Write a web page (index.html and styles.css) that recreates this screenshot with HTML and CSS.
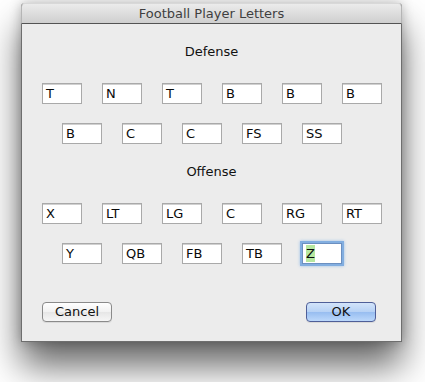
FILE: index.html
```html
<!DOCTYPE html>
<html>
<head>
<meta charset="utf-8">
<link rel="stylesheet" href="styles.css">
</head>
<body>
<div class="window">
  <div class="titlebar">Football Player Letters</div>
  <div class="content">
    <div class="heading">Defense</div>
    <div class="row row-a first">
      <div class="field">T</div><div class="field">N</div><div class="field">T</div><div class="field">B</div><div class="field">B</div><div class="field">B</div>
    </div>
    <div class="row row-b">
      <div class="field">B</div><div class="field">C</div><div class="field">C</div><div class="field">FS</div><div class="field">SS</div>
    </div>
    <div class="heading second">Offense</div>
    <div class="row row-a first">
      <div class="field">X</div><div class="field">LT</div><div class="field">LG</div><div class="field">C</div><div class="field">RG</div><div class="field">RT</div>
    </div>
    <div class="row row-b">
      <div class="field">Y</div><div class="field">QB</div><div class="field">FB</div><div class="field">TB</div><div class="field focused"><span class="sel">Z</span></div>
    </div>
    <div class="buttons">
      <div class="btn">Cancel</div>
      <div class="btn default">OK</div>
    </div>
  </div>
</div>
</body>
</html>
```
FILE: styles.css
```css
html, body {
  margin: 0;
  padding: 0;
  background: #ffffff;
  width: 425px;
  height: 382px;
  overflow: hidden;
}
body {
  font-family: "DejaVu Sans", "Liberation Sans", sans-serif;
  font-size: 13px;
  color: #111;
  padding-top: 3px;
  padding-left: 21px;
  box-sizing: border-box;
}
.window {
  width: 381px;
  height: 339px;
  background: #ececec;
  border: 1px solid #6e6e6e;
  border-top: none;
  box-sizing: border-box;
  border-radius: 4px 4px 0 0;
  box-shadow: 0 24px 36px rgba(0,0,0,0.6), 0 0 12px rgba(0,0,0,0.25);
  display: flex;
  flex-direction: column;
}
.titlebar {
  height: 21px;
  box-sizing: border-box;
  background: linear-gradient(#ebebeb, #cfcfcf);
  border-bottom: 1px solid #535353;
  border-radius: 4px 4px 0 0;
  text-align: center;
  font-size: 13px;
  line-height: 20px;
  color: #3f3f3f;
  margin: 0 -1px;
  border-left: 1px solid #b5b5b5;
  border-right: 1px solid #b5b5b5;
  border-top: 1px solid #d8d8d8;
}
.content {
  padding: 20px 0 0 0;
  display: flex;
  flex-direction: column;
}
.heading {
  text-align: center;
  height: 16px;
  line-height: 16px;
  font-size: 13px;
  color: #111;
}
.heading.second {
  margin-top: 20px;
}
.row {
  display: flex;
  gap: 20px;
  margin-top: 19px;
}
.row.first {
  margin-top: 23px;
}
.row-a {
  padding-left: 20px;
}
.row-b {
  padding-left: 40px;
}
.field {
  width: 40px;
  height: 21px;
  box-sizing: border-box;
  background: #fff;
  border: 1px solid #a9a9a9;
  box-shadow: inset 0 1px 0 #d0d0d0;
  padding-left: 3px;
  line-height: 20px;
  font-size: 13px;
  color: #0a0a0a;
}
.field.focused {
  box-shadow: 0 0 0 2px #82aee0, 0 0 3px 2px #9cc0e8;
  border-color: #6b8fc0;
}
.sel {
  background: #b6e7a0;
  padding: 1px 0;
}
.buttons {
  display: flex;
  justify-content: space-between;
  margin-top: 38px;
  padding: 0 25px 0 20px;
}
.btn {
  width: 70px;
  height: 20px;
  box-sizing: border-box;
  border-radius: 4px;
  border: 1px solid #8a8a8a;
  background: linear-gradient(#ffffff, #f1f1f1 50%, #e6e6e6 51%, #f6f6f6);
  text-align: center;
  line-height: 18px;
  font-size: 13px;
  color: #111;
  box-shadow: 0 1px 0 rgba(0,0,0,0.08);
}
.btn.default {
  border-color: #4f5f98;
  background: linear-gradient(#d3e4fa, #b6d1f5 50%, #97bdf0 51%, #bcd8fb);
}
```
